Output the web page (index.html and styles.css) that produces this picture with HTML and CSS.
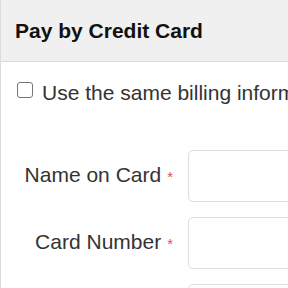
FILE: index.html
```html
<!DOCTYPE html>
<html>
<head>
<meta charset="utf-8">
<link rel="stylesheet" href="styles.css">
</head>
<body>
<div class="card">
  <div class="card-header">Pay by Credit Card</div>
  <div class="card-body">
    <label class="check-row">
      <input type="checkbox" class="check">
      <span>Use the same billing information as above</span>
    </label>
    <div class="form-row">
      <label class="form-label">Name on Card<span class="req">*</span></label>
      <input type="text" class="form-input">
    </div>
    <div class="form-row">
      <label class="form-label">Card Number<span class="req">*</span></label>
      <input type="text" class="form-input">
    </div>
    <div class="form-row">
      <span class="form-label"></span>
      <input type="text" class="form-input">
    </div>
  </div>
</div>
</body>
</html>
```
FILE: styles.css
```css
html, body {
  margin: 0;
  padding: 0;
  overflow: hidden;
  background: #fff;
}
body {
  font-family: "Liberation Sans", Arial, sans-serif;
  color: #333;
}
.card {
  width: 700px;
  height: 400px;
  border-left: 1px solid #dcdcdc;
  box-sizing: border-box;
}
.card-header {
  height: 61px;
  line-height: 61px;
  padding-left: 14px;
  background: #f0f0f0;
  border-bottom: 1px solid #dcdcdc;
  font-weight: bold;
  font-size: 21px;
  color: #111;
  white-space: nowrap;
}
.card-body {
  padding: 16px 0 0 0;
}
.check-row {
  display: flex;
  align-items: flex-start;
  height: 30px;
  line-height: 30px;
  font-size: 21px;
  white-space: nowrap;
  padding-left: 16px;
}
.check {
  appearance: none;
  -webkit-appearance: none;
  width: 16px;
  height: 16px;
  margin: 4px 9px 0 0;
  border: 1px solid #767676;
  border-radius: 3px;
  box-sizing: border-box;
  background: #fff;
  flex: none;
}
.form-row {
  display: grid;
  grid-template-columns: 172px 1fr;
  column-gap: 15px;
  align-items: center;
  margin-bottom: 15px;
}
.check-row + .form-row {
  margin-top: 42px;
}
.form-label {
  text-align: right;
  font-size: 21px;
  line-height: 24px;
  white-space: nowrap;
}
.req {
  color: #d9534f;
  font-size: 15px;
  margin-left: 6px;
}
.form-input {
  height: 52px;
  box-sizing: border-box;
  border: 1px solid #dedede;
  border-radius: 5px;
  margin: 0;
  padding: 0 12px;
  width: 100%;
}
```
